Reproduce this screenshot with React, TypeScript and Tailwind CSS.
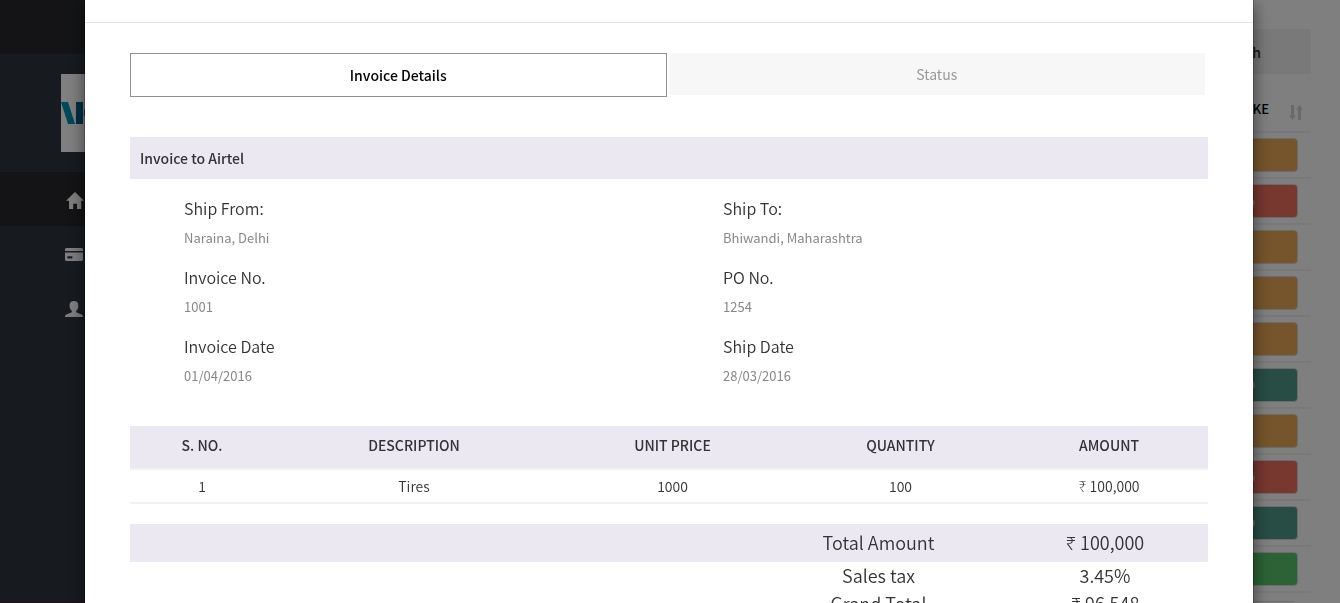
import React from "react";

type Tone = "orange" | "red" | "teal" | "green";

const toneClass: Record<Tone, string> = {
  orange: "bg-[#ecaa58]",
  red: "bg-[#f0705e]",
  teal: "bg-[#4e9a8a]",
  green: "bg-[#5ac46c]",
};

const actions: { tone: Tone; label: string }[] = [
  { tone: "orange", label: "" },
  { tone: "red", label: "Follow up" },
  { tone: "orange", label: "" },
  { tone: "orange", label: "" },
  { tone: "orange", label: "" },
  { tone: "teal", label: "PAID" },
  { tone: "orange", label: "" },
  { tone: "red", label: "Follow up" },
  { tone: "teal", label: "PAID" },
  { tone: "green", label: "" },
];

const details: [string, string][] = [
  ["Ship From:", "Naraina, Delhi"],
  ["Ship To:", "Bhiwandi, Maharashtra"],
  ["Invoice No.", "1001"],
  ["PO No.", "1254"],
  ["Invoice Date", "01/04/2016"],
  ["Ship Date", "28/03/2016"],
];

const totals: [string, string][] = [
  ["Total Amount", "₹ 100,000"],
  ["Sales tax", "3.45%"],
  ["Grand Total", "₹ 96,548"],
];

function HomeIcon() {
  return (
    <svg viewBox="0 0 18 17" className="h-[17px] w-[18px] fill-[#fcfcfc]" aria-hidden="true">
      <path d="M9 0 18 8.8H15.2V17H11V11.8H7.2V17H3V8.8H0Z" />
    </svg>
  );
}

function CardIcon() {
  return (
    <svg viewBox="0 0 18 13" className="h-[13px] w-[18px] fill-[#fcfcfc]" aria-hidden="true">
      <path d="M1 0H17L18 1V3H0V1ZM0 4.4H18V12L17 13H1L0 12ZM2.4 8.2V10.6H7.4V8.2Z" fillRule="evenodd" />
    </svg>
  );
}

function UserIcon() {
  return (
    <svg viewBox="0 0 18 16" className="h-4 w-[18px] fill-[#fcfcfc]" aria-hidden="true">
      <path d="M9 0C11.6 0 13.4 1.4 13.4 4.2 13.4 6.6 12.8 8.4 11.2 9.8V11.2L16.6 13.6C17.6 14 18 14.8 18 16H0C0 14.8.4 14 1.4 13.6L6.8 11.2V9.8C5.2 8.4 4.6 6.6 4.6 4.2 4.6 1.4 6.4 0 9 0Z" />
    </svg>
  );
}

function SortIcon() {
  return (
    <svg viewBox="0 0 14 15" className="h-[15px] w-[14px] fill-[#d4d4d4]" aria-hidden="true">
      <path d="M2 0H5V10.5H7L3.5 15 0 10.5H2ZM9 15H12V4.5H14L10.5 0 7 4.5H9Z" />
    </svg>
  );
}

function Sidebar() {
  return (
    <aside className="flex w-[230px] shrink-0 flex-col border-b border-[#3c2230] bg-[#2e3640]">
      <div className="h-[54px] bg-[#28292e]" />
      <div className="pt-5 pb-5 pl-[61px]">
        <svg viewBox="0 0 110 78" className="h-[78px] w-[110px] bg-white" role="img" aria-label="Company logo">
          <path d="M0 28H7L14 50H7Z" fill="#0092b0" />
          <path d="M15 28H22V50H15Z" fill="#005f86" />
          <path d="M42 28H34A11 11 0 0 0 34 50H42V44H35A5 5 0 0 1 35 34H42Z" fill="#005f86" />
        </svg>
      </div>
      <nav className="flex flex-col">
        <a href="#home" aria-label="Home" className="flex h-[54px] items-center bg-[#28282c] pt-0.5 pl-[66px]">
          <HomeIcon />
        </a>
        <a href="#payments" aria-label="Payments" className="flex h-[55px] items-center pt-0.5 pl-[65px]">
          <CardIcon />
        </a>
        <a href="#account" aria-label="Account" className="flex h-[55px] items-center pl-[65px]">
          <UserIcon />
        </a>
      </nav>
    </aside>
  );
}

function OrdersPage() {
  return (
    <main className="flex min-w-0 flex-1 flex-col items-end pt-[29px] pr-[29px]">
      <button type="button" className="h-[45px] w-[180px] shrink-0 bg-[#f2f2f2] pr-[50px] text-right text-sm font-medium text-[#333]">
        Search
      </button>
      <table className="mt-3 w-full border-collapse">
        <thead>
          <tr className="h-[46px] border-b-2 border-[#f2f2f2]">
            <th className="p-0 text-right text-[13px] font-medium text-black">
              <span className="flex items-center justify-end gap-5 pr-2">
                ACTION TO TAKE
                <span className="pt-2">
                  <SortIcon />
                </span>
              </span>
            </th>
          </tr>
        </thead>
        <tbody>
          {actions.map((action, i) => (
            <tr key={i} className="h-[46px] border-b-2 border-[#f2f2f2]">
              <td className="p-0 pr-[13px]">
                <button
                  type="button"
                  aria-label={action.label || "Open"}
                  className={`ml-auto block h-[34px] w-[130px] rounded border border-[#d8d8d8] pr-[42px] text-right text-[13px] text-white ${toneClass[action.tone]}`}
                >
                  {action.label}
                </button>
              </td>
            </tr>
          ))}
        </tbody>
      </table>
      <div className="mt-2 mr-4 h-[34px] w-[130px] shrink-0 rounded border border-[#d8d8d8]" />
    </main>
  );
}

function InvoiceDialog() {
  return (
    <div
      role="dialog"
      aria-modal="true"
      aria-label="Invoice"
      className="min-h-full border-x border-black/20 bg-white bg-clip-padding text-[#333] shadow-[0_5px_15px_rgba(0,0,0,0.5)]"
    >
      <div className="h-[23px] border-b border-[#e5e5e5]" />
      <div className="px-[45px] pt-[30px]">
        <div role="tablist" className="mr-[3px] grid h-11 grid-cols-2 items-start gap-0.5">
          <button type="button" role="tab" aria-selected="true" className="h-11 border border-[#909090] text-sm font-medium text-black">
            Invoice Details
          </button>
          <button type="button" role="tab" aria-selected="false" className="h-[42px] bg-[#f7f7f7] text-sm text-[#999]">
            Status
          </button>
        </div>

        <h2 className="mt-10 bg-[#ebe8f2] px-2.5 text-sm leading-[42px] font-medium">Invoice to Airtel</h2>

        <dl className="grid grid-cols-2 pt-[15px]">
          {details.map(([name, value]) => (
            <div key={name} className="h-[69px] pl-[54px]">
              <dt className="text-base leading-7 font-[350]">{name}</dt>
              <dd className="text-[13px] leading-8 text-[#888]">{value}</dd>
            </div>
          ))}
        </dl>

        <table className="mt-[25px] w-full table-fixed border-collapse text-center text-sm">
          <colgroup>
            <col className="w-[144px]" />
            <col className="w-[280px]" />
            <col className="w-[237px]" />
            <col className="w-[219px]" />
            <col className="w-[198px]" />
          </colgroup>
          <thead>
            <tr className="h-[43px] border-b-2 border-[#f2f2f2] bg-[#ebe8f2]">
              {["S. NO.", "DESCRIPTION", "UNIT PRICE", "QUANTITY", "AMOUNT"].map((h) => (
                <th key={h} scope="col" className="p-0 pb-1 font-medium">
                  {h}
                </th>
              ))}
            </tr>
          </thead>
          <tbody>
            <tr className="h-[34px] border-b-2 border-[#f2f2f2] font-[350]">
              {["1", "Tires", "1000", "100", "₹ 100,000"].map((c) => (
                <td key={c} className="p-0">
                  {c}
                </td>
              ))}
            </tr>
          </tbody>
        </table>

        <table className="mt-5 w-full table-fixed border-collapse text-center text-lg font-[350]">
          <colgroup>
            <col className="w-[625px]" />
            <col className="w-[247px]" />
            <col className="w-[206px]" />
          </colgroup>
          <tbody>
            {totals.map(([name, value], i) => (
              <tr key={name} className={i === 0 ? "h-[38px] bg-[#ebe8f2]" : "h-7"}>
                <td className="p-0" />
                <th scope="row" className="p-0 pb-0.5 leading-[26px] font-[350]">
                  {name}
                </th>
                <td className="p-0 pb-0.5 leading-[26px]">{value}</td>
              </tr>
            ))}
          </tbody>
        </table>
      </div>
    </div>
  );
}

export default function App() {
  return (
    <div className="h-screen overflow-hidden bg-white font-['Noto_Sans_CJK_SC','Noto_Sans',sans-serif]">
      <div className="flex h-full overflow-hidden">
        <Sidebar />
        <OrdersPage />
      </div>
      <div className="fixed inset-0 overflow-hidden bg-black/50 pr-[86px] pl-[84px]">
        <InvoiceDialog />
      </div>
    </div>
  );
}
